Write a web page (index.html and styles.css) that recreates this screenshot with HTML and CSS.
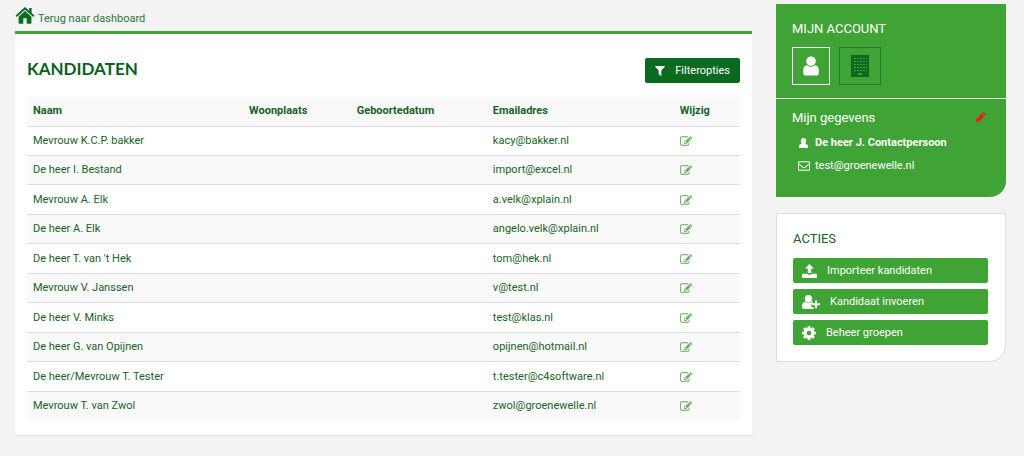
FILE: index.html
```html
<!DOCTYPE html>
<html lang="nl">
<head>
<meta charset="utf-8">
<meta name="viewport" content="width=device-width, initial-scale=1">
<title>Kandidaten</title>
<link rel="stylesheet" href="styles.css">
</head>
<body>
<svg class="sprite" aria-hidden="true">
  <symbol id="home" viewBox="0 0 20 18"><path d="M10 0 0 9l1.300 1.500L10 2.900l8.700 7.600L20 9l-3-2.700V1h-2.600v3z"/><path d="M10 4.300 3.200 10.200V17q0 .8.800.8h4.200V12h3.600v5.800H16q.8 0 .8-.8v-6.800z"/></symbol>
  <symbol id="user" viewBox="256 128 1280 1536"><path d="M1536 1399q0 109-62.500 187t-150.500 78h-854q-88 0-150.500-78t-62.500-187q0-85 8.500-160.500t31.500-152 58.500-131 94-89 134.500-34.500q131 128 313 128t313-128q76 0 134.500 34.500t94 89 58.500 131 31.500 152 8.500 160.500zm-256-887q0 159-112.500 271.500t-271.500 112.500-271.500-112.500-112.500-271.500 112.500-271.500 271.500-112.500 271.500 112.500 112.500 271.500z"/></symbol>
  <symbol id="person" viewBox="0 0 9 10"><path d="M4.500 0C6.400 0 7.200 1.200 7.200 2.800 7.200 4 6.800 5 6.200 5.700L8.400 6.800q.6.400.6 1.200V10H0V8Q0 7.200.6 6.800L2.800 5.700C2.200 5 1.800 4 1.800 2.800 1.800 1.200 2.600 0 4.500 0z"/></symbol>
  <symbol id="filter" viewBox="192 256 1408 1408"><path d="M1595 295q17 41-14 70l-493 493v742q0 42-39 59-13 5-25 5-27 0-45-19l-256-256q-19-19-19-45v-486l-493-493q-31-29-14-70 17-39 59-39h1280q42 0 59 39z"/></symbol>
  <symbol id="edit" viewBox="0 128 1792 1408"><path d="M888 1184l116-116-152-152-116 116v56h96v96h56zm440-720q-16-16-33 1l-350 350q-17 17-1 33t33-1l350-350q17-17 1-33zm80 594v190q0 119-84.500 203.500t-203.500 84.500h-832q-119 0-203.500-84.500t-84.500-203.500v-832q0-119 84.500-203.500t203.500-84.500h832q63 0 117 25 15 7 18 23 3 17-9 29l-49 49q-14 14-32 8-23-6-45-6h-832q-66 0-113 47t-47 113v832q0 66 47 113t113 47h832q66 0 113-47t47-113v-126q0-13 9-22l64-64q15-15 35-7t20 29zm-96-738l288 288-672 672h-288v-288zm444 132l-92 92-288-288 92-92q28-28 68-28t68 28l152 152q28 28 28 68t-28 68z"/></symbol>
  <symbol id="mail" viewBox="0 256 1792 1408"><path d="M1664 1504v-768q-32 36-69 66-268 206-426 338-51 43-83 67t-86.500 48.500-102.500 24.500h-2q-48 0-102.500-24.500t-86.500-48.500-83-67q-158-132-426-338-37-30-69-66v768q0 13 9.500 22.500t22.500 9.500h1472q13 0 22.500-9.500t9.500-22.500zm0-1051v-24.500l-.5-13-3-12.500-5.500-9-9-7.500-14-2.500h-1472q-13 0-22.500 9.500t-9.500 22.500q0 168 147 284 193 152 401 317 6 5 35 29.500t46 37.500 44.500 31.500 50.500 27.500 43 9h2q20 0 43-9t50.500-27.500 44.500-31.500 46-37.500 35-29.500q208-165 401-317 54-43 100.500-115.500t46.500-131.500zm128-37v1088q0 66-47 113t-113 47h-1472q-66 0-113-47t-47-113v-1088q0-66 47-113t113-47h1472q66 0 113 47t47 113z"/></symbol>
  <symbol id="building" viewBox="0 0 18 22"><path fill-rule="evenodd" d="M0 0h18v22H0zM3 3v1h2V3zm3 0v1h2V3zm3 0v1h2V3zm3 0v1h2V3zm3 0v1h1V3zM3 6v1h2V6zm3 0v1h2V6zm3 0v1h2V6zm3 0v1h2V6zm3 0v1h1V6zM3 9v1h2V9zm3 0v1h2V9zm3 0v1h2V9zm3 0v1h2V9zm3 0v1h1V9zM3 12v1h2v-1zm3 0v1h2v-1zm3 0v1h2v-1zm3 0v1h2v-1zm3 0v1h1v-1zM3 15v1h2v-1zm3 0v1h2v-1zm3 0v1h2v-1zm3 0v1h2v-1zm3 0v1h1v-1zM7 18v2h4v-2z"/></symbol>
  <symbol id="pencil" viewBox="0 0 10 10"><path d="M6.700.5q.7-.7 1.400 0l1.400 1.400q.7.700 0 1.400l-.5.5-2.800-2.800zM5.700 1.500l2.800 2.800L3.200 9.400 0 10l.6-3.200z"/></symbol>
  <symbol id="upload" viewBox="0 0 15 14"><path d="M7.500 0 12 4.600H9.200V9H5.800V4.600H3zM0 10.300Q0 9.700.6 9.700h4.200q.5 1 2.700 1t2.700-1h4.200q.6 0 .6.600v3q0 .6-.6.600H.6q-.6 0-.6-.6z"/></symbol>
  <symbol id="user-plus" viewBox="0 0 18 14"><ellipse cx="6.500" cy="3.700" rx="3.700" ry="3.700"/><path d="M3 6.600q3.500 3 7 0h.6v2.200H9.400v3.400h2.400V14H2.500Q0 14 0 11.500 0 7.500 3 6.600z"/><path d="M13 5.400h2v2.900h3v2h-3v2.900h-2v-2.900h-3v-2h3z"/></symbol>
  <symbol id="cog" viewBox="128 128 1536 1536"><path d="M1152 896q0-106-75-181t-181-75-181 75-75 181 75 181 181 75 181-75 75-181zm512-109v222q0 12-8 23t-20 13l-185 28q-19 54-39 91 35 50 107 138 10 12 10 25t-9 23q-27 37-99 108t-94 71q-12 0-26-9l-138-108q-44 23-91 38-16 136-29 186-7 28-36 28h-222q-14 0-24.500-8.500t-11.500-21.500l-28-184q-49-16-90-37l-141 107q-10 9-25 9-14 0-25-11-126-114-165-168-7-10-7-23 0-12 8-23 15-21 51-66.500t54-70.500q-27-50-41-99l-183-27q-13-2-21-12.500t-8-23.500v-222q0-12 8-23t19-13l186-28q14-46 39-92-40-57-107-138-10-12-10-24 0-10 9-23 26-36 98.500-107.500t94.500-71.500q13 0 26 10l138 107q44-23 91-38 16-136 29-186 7-28 36-28h222q14 0 24.500 8.500t11.500 21.500l28 184q49 16 90 37l142-107q9-9 24-9 13 0 25 10 129 119 165 170 7 8 7 22 0 12-8 23-15 21-51 66.500t-54 70.500q26 50 41 98l183 28q13 2 21 12.500t8 23.500z"/></symbol>
</svg>
<div class="page">
  <main class="main">
    <a class="back" href="#"><svg class="icon icon-home"><use href="#home"/></svg><span class="back-label">Terug naar dashboard</span></a>
    <section class="panel">
      <header class="panel-head">
        <h1 class="title">KANDIDATEN</h1>
        <button class="filter" type="button"><svg class="icon icon-filter"><use href="#filter"/></svg>Filteropties</button>
      </header>
      <table class="table">
        <colgroup><col class="col-name"><col class="col-city"><col class="col-birth"><col class="col-mail"><col></colgroup>
        <thead><tr><th>Naam</th><th>Woonplaats</th><th>Geboortedatum</th><th>Emailadres</th><th>Wijzig</th></tr></thead>
        <tbody>
          <tr><td>Mevrouw K.C.P. bakker</td><td></td><td></td><td>kacy@bakker.nl</td><td><a class="edit" href="#" aria-label="Wijzig"><svg class="icon icon-edit"><use href="#edit"/></svg></a></td></tr>
          <tr><td>De heer I. Bestand</td><td></td><td></td><td>import@excel.nl</td><td><a class="edit" href="#" aria-label="Wijzig"><svg class="icon icon-edit"><use href="#edit"/></svg></a></td></tr>
          <tr><td>Mevrouw A. Elk</td><td></td><td></td><td>a.velk@xplain.nl</td><td><a class="edit" href="#" aria-label="Wijzig"><svg class="icon icon-edit"><use href="#edit"/></svg></a></td></tr>
          <tr><td>De heer A. Elk</td><td></td><td></td><td>angelo.velk@xplain.nl</td><td><a class="edit" href="#" aria-label="Wijzig"><svg class="icon icon-edit"><use href="#edit"/></svg></a></td></tr>
          <tr><td>De heer T. van 't Hek</td><td></td><td></td><td>tom@hek.nl</td><td><a class="edit" href="#" aria-label="Wijzig"><svg class="icon icon-edit"><use href="#edit"/></svg></a></td></tr>
          <tr><td>Mevrouw V. Janssen</td><td></td><td></td><td>v@test.nl</td><td><a class="edit" href="#" aria-label="Wijzig"><svg class="icon icon-edit"><use href="#edit"/></svg></a></td></tr>
          <tr><td>De heer V. Minks</td><td></td><td></td><td>test@klas.nl</td><td><a class="edit" href="#" aria-label="Wijzig"><svg class="icon icon-edit"><use href="#edit"/></svg></a></td></tr>
          <tr><td>De heer G. van Opijnen</td><td></td><td></td><td>opijnen@hotmail.nl</td><td><a class="edit" href="#" aria-label="Wijzig"><svg class="icon icon-edit"><use href="#edit"/></svg></a></td></tr>
          <tr><td>De heer/Mevrouw T. Tester</td><td></td><td></td><td>t.tester@c4software.nl</td><td><a class="edit" href="#" aria-label="Wijzig"><svg class="icon icon-edit"><use href="#edit"/></svg></a></td></tr>
          <tr><td>Mevrouw T. van Zwol</td><td></td><td></td><td>zwol@groenewelle.nl</td><td><a class="edit" href="#" aria-label="Wijzig"><svg class="icon icon-edit"><use href="#edit"/></svg></a></td></tr>
        </tbody>
      </table>
    </section>
  </main>
  <aside class="side">
    <section class="account">
      <div class="account-top">
        <h2 class="side-title">MIJN ACCOUNT</h2>
        <div class="tabs">
          <button class="tab tab-active" type="button" aria-label="Persoon"><svg class="icon icon-user"><use href="#user"/></svg></button>
          <button class="tab" type="button" aria-label="Bedrijf"><svg class="icon icon-building"><use href="#building"/></svg></button>
        </div>
      </div>
      <div class="details">
        <div class="details-head"><h3 class="details-title">Mijn gegevens</h3><a class="pencil" href="#" aria-label="Gegevens wijzigen"><svg class="icon icon-pencil"><use href="#pencil"/></svg></a></div>
        <ul class="contact">
          <li class="contact-row contact-name"><span class="contact-icon"><svg class="icon icon-person"><use href="#person"/></svg></span>De heer J. Contactpersoon</li>
          <li class="contact-row"><span class="contact-icon"><svg class="icon icon-mail"><use href="#mail"/></svg></span>test@groenewelle.nl</li>
        </ul>
      </div>
    </section>
    <section class="actions">
      <h2 class="side-title">ACTIES</h2>
      <div class="action-list">
        <button class="action" type="button"><svg class="icon icon-upload"><use href="#upload"/></svg>Importeer kandidaten</button>
        <button class="action" type="button"><svg class="icon icon-plus"><use href="#user-plus"/></svg>Kandidaat invoeren</button>
        <button class="action" type="button"><svg class="icon icon-cog"><use href="#cog"/></svg>Beheer groepen</button>
      </div>
    </section>
  </aside>
</div>
</body>
</html>
```
FILE: styles.css
```css
* { box-sizing: border-box; }
body {
  margin: 0;
  background: #f3f3f3;
  color: #186228;
  font: 11px/16px Roboto, "Liberation Sans", sans-serif;
}
h1, h2, h3, ul { margin: 0; padding: 0; }
ul { list-style: none; }
a { color: inherit; text-decoration: none; }
button { font: inherit; cursor: pointer; }
.sprite { position: absolute; width: 0; height: 0; }
.icon { display: block; flex: none; fill: currentColor; }

.page {
  display: grid;
  grid-template-columns: minmax(0, 1fr) 230px;
  align-items: start;
  gap: 24px;
  padding: 4px 18px 20px 15px;
}

.back { display: flex; gap: 3px; height: 27px; padding-top: 3px; color: #0b6b23; }
.back-label { padding-top: 4px; color: #2f7340; }
.icon-home { width: 20px; height: 17px; }

.panel {
  padding: 24px 12px 15px;
  border: 0 solid #e9e9e9;
  border-width: 3px 0 1px;
  border-top-color: #3fa435;
  background: #fff;
  box-shadow: 0 0 1px #ddd;
}
.panel-head { display: flex; justify-content: space-between; align-items: flex-start; margin-bottom: 14px; }
.title { font: 700 17px/22px Lato, sans-serif; color: #0b6022; }
.filter {
  display: flex;
  align-items: center;
  gap: 10px;
  height: 25px;
  padding: 0 10px;
  border: 0;
  border-radius: 2px;
  background: #0b6a20;
  color: #fff;
}
.icon-filter { width: 10px; height: 10px; }

.table { width: 100%; height: 323px; border-collapse: collapse; table-layout: fixed; }
.col-name { width: 30.3%; }
.col-city { width: 15.1%; }
.col-birth { width: 19.1%; }
.col-mail { width: 26.2%; }
.table th, .table td { padding: 0 6px; text-align: left; border-bottom: 1px solid #ddd; }
.table th { height: 29px; font-weight: 700; }
.table thead tr, .table tbody tr:nth-child(even) { background: #f9f9f9; }
.table tbody tr:last-child td { border-bottom: 0; }
.edit { display: inline-block; vertical-align: middle; color: #5fa957; }
.icon-edit { width: 12px; height: 10px; }

.side { display: grid; gap: 16px; }
.side-title { font-size: 13px; line-height: 18px; font-weight: 400; }
.account { background: #3fa435; color: #fff; border-radius: 0 0 16px 0; }
.account-top { padding: 16px 16px 13px; border-bottom: 1px solid #e4f3e2; }
.tabs { display: flex; gap: 9px; margin-top: 9px; }
.tab {
  display: grid;
  place-items: center;
  height: 38px;
  padding: 0 10px;
  border: 1px solid #18802a;
  background: transparent;
  color: #0b6a20;
}
.tab-active { border-color: #fff; color: #fff; }
.icon-user { width: 16px; height: 20px; }
.icon-building { width: 20px; height: 22px; }
.details { padding: 10px 16px 23px; }
.details-head { display: flex; justify-content: space-between; }
.details-title { font-size: 13px; line-height: 18px; font-weight: 400; }
.pencil { padding: 3px 4px 0 0; color: #f21c0d; }
.icon-pencil { width: 10px; height: 10px; }
.contact { display: grid; gap: 7px; padding: 8px 0 0 5px; }
.contact-row { display: flex; align-items: center; gap: 5px; }
.contact-name { font-weight: 700; }
.contact-icon { display: grid; place-items: center; width: 13px; }
.icon-person { width: 9px; height: 10px; }
.icon-mail { width: 12px; height: 10px; }

.actions { padding: 16px 17px 16px 16px; border: 1px solid #ddd; border-radius: 0 0 16px 0; background: #fff; }
.actions .side-title { margin-bottom: 10px; }
.action-list { display: grid; gap: 6px; }
.action {
  display: flex;
  align-items: center;
  gap: 10px;
  height: 25px;
  padding: 0 9px;
  border: 0;
  border-radius: 2px;
  background: #3fa435;
  color: #fff;
}
.icon-upload { width: 15px; height: 14px; }
.icon-plus { width: 18px; height: 14px; }
.icon-cog { width: 14px; height: 14px; }
```
